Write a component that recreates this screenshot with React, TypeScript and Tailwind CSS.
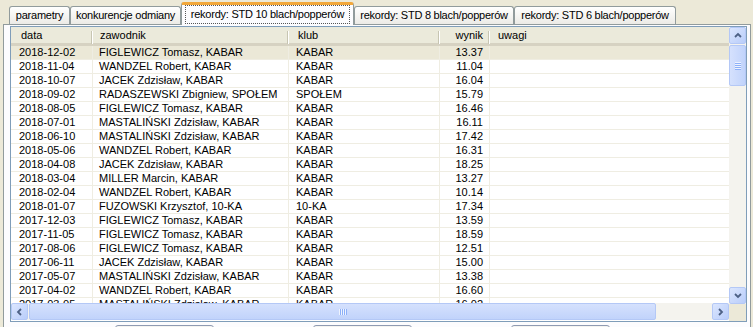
import type { ReactNode } from 'react';

type Row = [string, string, string, string];

const rows: Row[] = [
  ['2018-12-02', 'FIGLEWICZ Tomasz, KABAR', 'KABAR', '13.37'],
  ['2018-11-04', 'WANDZEL Robert, KABAR', 'KABAR', '11.04'],
  ['2018-10-07', 'JACEK Zdzisław, KABAR', 'KABAR', '16.04'],
  ['2018-09-02', 'RADASZEWSKI Zbigniew, SPOŁEM', 'SPOŁEM', '15.79'],
  ['2018-08-05', 'FIGLEWICZ Tomasz, KABAR', 'KABAR', '16.46'],
  ['2018-07-01', 'MASTALIŃSKI Zdzisław, KABAR', 'KABAR', '16.11'],
  ['2018-06-10', 'MASTALIŃSKI Zdzisław, KABAR', 'KABAR', '17.42'],
  ['2018-05-06', 'WANDZEL Robert, KABAR', 'KABAR', '16.31'],
  ['2018-04-08', 'JACEK Zdzisław, KABAR', 'KABAR', '18.25'],
  ['2018-03-04', 'MILLER Marcin, KABAR', 'KABAR', '13.27'],
  ['2018-02-04', 'WANDZEL Robert, KABAR', 'KABAR', '10.14'],
  ['2018-01-07', 'FUZOWSKI Krzysztof, 10-KA', '10-KA', '17.34'],
  ['2017-12-03', 'FIGLEWICZ Tomasz, KABAR', 'KABAR', '13.59'],
  ['2017-11-05', 'FIGLEWICZ Tomasz, KABAR', 'KABAR', '18.59'],
  ['2017-08-06', 'FIGLEWICZ Tomasz, KABAR', 'KABAR', '12.51'],
  ['2017-06-11', 'JACEK Zdzisław, KABAR', 'KABAR', '15.00'],
  ['2017-05-07', 'MASTALIŃSKI Zdzisław, KABAR', 'KABAR', '13.38'],
  ['2017-04-02', 'WANDZEL Robert, KABAR', 'KABAR', '16.60'],
  ['2017-03-05', 'MASTALIŃSKI Zdzisław, KABAR', 'KABAR', '16.02'],
];

const tabs = [
  { label: 'parametry', w: 'w-[61px]' },
  { label: 'konkurencje odmiany', w: 'w-[111px]' },
  { label: 'rekordy: STD 10 blach/popperów', w: 'w-[173px]', active: true },
  { label: 'rekordy: STD 8 blach/popperów', w: 'w-[160px]' },
  { label: 'rekordy: STD 6 blach/popperów', w: 'w-[162px]' },
];

function Chevron({ dir }: { dir: 'up' | 'down' | 'left' | 'right' }) {
  const d = {
    up: 'M1 5 L4 2 L7 5',
    down: 'M1 2 L4 5 L7 2',
    left: 'M5 1 L2 4 L5 7',
    right: 'M2 1 L5 4 L2 7',
  }[dir];
  const size = dir === 'up' || dir === 'down' ? { w: 8, h: 7 } : { w: 7, h: 8 };
  return (
    <svg width={size.w} height={size.h} viewBox={`0 0 ${size.w} ${size.h}`}>
      <path d={d} fill="none" stroke="#4d6185" strokeWidth="1.8" />
    </svg>
  );
}

function ScrollButton({ children }: { children: ReactNode }) {
  return (
    <div className="flex h-[17px] w-[17px] items-center justify-center rounded-[2px] border border-[#b4c8f6] bg-[linear-gradient(135deg,#dbe6fe,#b9cdfa)]">
      {children}
    </div>
  );
}

function HeaderSep() {
  return <div className="absolute right-0 top-[3px] h-[13px] w-[2px] border-l border-[#c7c5b2] border-r border-r-white" />;
}

export default function App() {
  return (
    <div className="flex h-[327px] w-[753px] flex-col overflow-hidden bg-[#ece9d8] font-['Liberation_Sans',Arial,sans-serif] text-[11px] leading-none text-black">
      {/* tab strip */}
      <div className="flex h-[24px] shrink-0 items-end pl-[9px] tracking-[-0.25px]">
        {tabs.map((tab) =>
          tab.active ? (
            <div
              key={tab.label}
              className={`relative z-10 -mb-px flex h-[23px] ${tab.w} items-center rounded-t-[3px] border-x border-t-[3px] border-x-[#919b9c] border-t-[#f2a73a] bg-[#fcfcfe] px-[3px] pb-[1px]`}
            >
              <span className="flex-1 border border-dotted border-[#555] py-[3px] text-center">{tab.label}</span>
            </div>
          ) : (
            <div
              key={tab.label}
              className={`flex h-[18px] ${tab.w} items-center justify-center whitespace-nowrap rounded-t-[3px] border-x border-t border-[#919b9c] bg-[linear-gradient(#ffffff,#ecebe6)]`}
            >
              {tab.label}
            </div>
          )
        )}
      </div>

      {/* panel */}
      <div className="ml-[3px] flex w-[748px] flex-1 flex-col border border-[#919b9c] bg-[#fcfcfe] pl-[6px] pt-[1px]">
        <div className="flex h-[296px] w-[737px] border border-[#7f9db9] bg-white">
          <div className="flex w-[718px] flex-col">
            {/* grid */}
            <div className="h-[276px] overflow-hidden">
              <div className="flex h-[19px] border-b-[3px] border-[#d6d2c2] bg-[#ebeadb] pt-px text-black">
                <div className="relative flex w-[82px] items-center pl-[10px]">
                  data
                  <HeaderSep />
                </div>
                <div className="relative flex w-[196px] items-center pl-[7px]">
                  zawodnik
                  <HeaderSep />
                </div>
                <div className="relative flex w-[151px] items-center pl-[9px]">
                  klub
                  <HeaderSep />
                </div>
                <div className="relative flex w-[50px] items-center justify-end pr-[7px]">
                  wynik
                  <HeaderSep />
                </div>
                <div className="flex flex-1 items-center pl-[8px]">uwagi</div>
              </div>
              {rows.map((r, i) => (
                <div
                  key={r[0]}
                  className={`flex h-[14px] border-b border-[#efede2] ${i === 0 ? 'bg-[#ebe8d7]' : ''}`}
                >
                  <div className="flex w-[82px] items-center border-r border-[#efede2] pl-[8px]">{r[0]}</div>
                  <div className="flex w-[196px] items-center whitespace-nowrap border-r border-[#efede2] pl-[6px]">{r[1]}</div>
                  <div className="flex w-[151px] items-center border-r border-[#efede2] pl-[7px]">{r[2]}</div>
                  <div className="flex w-[50px] items-center justify-end border-r border-[#efede2] pr-[6px]">{r[3]}</div>
                  <div className="flex-1" />
                </div>
              ))}
            </div>
            {/* horizontal scrollbar */}
            <div className="flex h-[17px] items-center bg-[#f4f3ee]">
              <ScrollButton>
                <Chevron dir="left" />
              </ScrollButton>
              <div className="ml-px flex h-[17px] w-[627px] items-center justify-center rounded-[2px] border border-[#b4c8f6] bg-[linear-gradient(#d5e1fd,#c1d3fb)]">
                <div className="flex h-[6px] gap-[1px]">
                  {[0, 1, 2, 3].map((k) => (
                    <div key={k} className="w-[1px] bg-[#eef3fe] shadow-[1px_0_0_#8cb0f8]" />
                  ))}
                </div>
              </div>
              <div className="flex-1" />
              <ScrollButton>
                <Chevron dir="right" />
              </ScrollButton>
            </div>
          </div>
          {/* vertical scrollbar */}
          <div className="flex w-[17px] flex-col bg-[#f4f3ee]">
            <ScrollButton>
              <Chevron dir="up" />
            </ScrollButton>
            <div className="mt-px flex h-[41px] w-[17px] items-center justify-center rounded-[2px] border border-[#b4c8f6] bg-[linear-gradient(90deg,#d5e1fd,#c1d3fb)]">
              <div className="flex w-[6px] flex-col gap-[1px]">
                {[0, 1, 2, 3].map((k) => (
                  <div key={k} className="h-[1px] bg-[#eef3fe] shadow-[0_1px_0_#8cb0f8]" />
                ))}
              </div>
            </div>
            <div className="flex-1" />
            <ScrollButton>
              <Chevron dir="down" />
            </ScrollButton>
            <div className="h-[17px] bg-[#ece9d8]" />
          </div>
        </div>

        {/* buttons below, cut off by the window */}
        <div className="mt-[3px] flex gap-[99px] pl-[105px]">
          {[0, 1, 2].map((k) => (
            <div key={k} className="h-[12px] w-[99px] rounded-t-[3px] border border-[#8f9bb3] bg-[#f4f4f0]" />
          ))}
        </div>
      </div>
    </div>
  );
}
